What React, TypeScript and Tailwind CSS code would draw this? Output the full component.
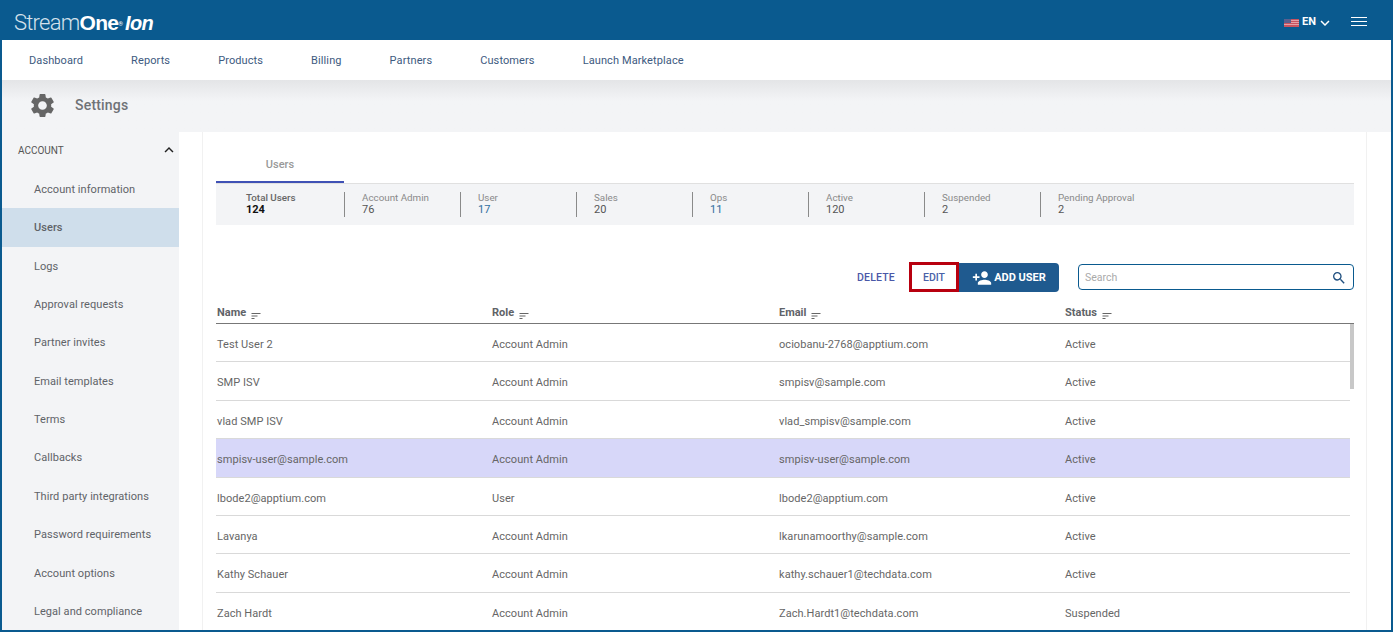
import React from 'react';
import { MdSettings, MdPersonAdd, MdSort, MdSearch, MdExpandLess, MdExpandMore } from 'react-icons/md';

const navLinks = ['Dashboard', 'Reports', 'Products', 'Billing', 'Partners', 'Customers', 'Launch Marketplace'];

const sideItems = [
  'Account information',
  'Users',
  'Logs',
  'Approval requests',
  'Partner invites',
  'Email templates',
  'Terms',
  'Callbacks',
  'Third party integrations',
  'Password requirements',
  'Account options',
  'Legal and compliance',
];

const stats = [
  { label: 'Total Users', value: '124', strong: true },
  { label: 'Account Admin', value: '76' },
  { label: 'User', value: '17', link: true },
  { label: 'Sales', value: '20' },
  { label: 'Ops', value: '11', link: true },
  { label: 'Active', value: '120' },
  { label: 'Suspended', value: '2' },
  { label: 'Pending Approval', value: '2' },
];

const users = [
  ['Test User 2', 'Account Admin', 'ociobanu-2768@apptium.com', 'Active'],
  ['SMP ISV', 'Account Admin', 'smpisv@sample.com', 'Active'],
  ['vlad SMP ISV', 'Account Admin', 'vlad_smpisv@sample.com', 'Active'],
  ['smpisv-user@sample.com', 'Account Admin', 'smpisv-user@sample.com', 'Active'],
  ['lbode2@apptium.com', 'User', 'lbode2@apptium.com', 'Active'],
  ['Lavanya', 'Account Admin', 'lkarunamoorthy@sample.com', 'Active'],
  ['Kathy Schauer', 'Account Admin', 'kathy.schauer1@techdata.com', 'Active'],
  ['Zach Hardt', 'Account Admin', 'Zach.Hardt1@techdata.com', 'Suspended'],
];

const Flag = () => (
  <svg width="15" height="8" viewBox="0 0 15 8" className="block">
    <rect width="15" height="8" fill="#e3a0a8" />
    <rect y="0" width="15" height="1" fill="#c8535f" />
    <rect y="2" width="15" height="1" fill="#c8535f" />
    <rect y="4" width="15" height="1" fill="#c8535f" />
    <rect y="6" width="15" height="2" fill="#c8535f" />
    <rect width="7" height="4" fill="#5a5f8e" />
  </svg>
);

const HeaderCell = ({ label, className }: { label: string; className: string }) => (
  <div className={`flex items-center text-[11px] font-bold text-[#5f6368] ${className}`}>
    <span className="mt-[2px]">{label}</span>
    <MdSort size={12} className="ml-[4px] mt-[7px] text-[#666]" />
  </div>
);

export default function App() {
  return (
    <div className="h-[632px] w-[1393px] overflow-hidden bg-[#0a5a8f] px-[2px] pb-[2px] font-['Roboto',sans-serif]">
      <div className="-mx-[2px] flex h-[40px] items-center justify-between bg-[#0a5a8f] pl-[14px] pr-[26px] pt-[5px]">
        <div className="flex items-baseline text-[22px] leading-[26px] text-white">
          <span className="font-light tracking-[-0.75px] text-[#d5e2ec]">Stream</span>
          <span className="font-['Liberation_Sans',sans-serif] text-[21px] font-bold tracking-[-0.7px]">One</span>
          <span className="mb-[9px] self-end text-[6px] leading-[6px]">®</span>
          <span className="ml-[2px] font-['Liberation_Sans',sans-serif] text-[20px] font-bold italic tracking-[-0.6px]">Ion</span>
        </div>
        <div className="flex items-center">
          <Flag />
          <span className="ml-[3px] text-[11px] font-bold text-white">EN</span>
          <MdExpandMore size={18} className="text-white" />
          <div className="mb-[3px] ml-[17px] flex w-[16px] flex-col gap-[3px]">
            <div className="h-[1px] bg-white" />
            <div className="h-[1px] bg-white" />
            <div className="h-[1px] bg-white" />
          </div>
        </div>
      </div>

      <div className="flex h-[40px] items-center bg-white pl-[27px] pt-[2px] text-[11px] tracking-[0.1px] text-[#3d5a80]">
        {navLinks.map((link) => (
          <span key={link} className="mr-[48px]">{link}</span>
        ))}
      </div>

      <div className="flex h-[52px] items-center bg-gradient-to-b from-[#e4e5e7] to-[#f3f4f6] to-40% pb-[1px] pl-[26px]">
        <MdSettings size={29} className="text-[#666]" />
        <span className="ml-[18px] text-[14px] font-medium tracking-[0.2px] text-[#6f7276]">Settings</span>
      </div>

      <div className="flex h-[498px] overflow-hidden">
        <aside className="w-[177px] shrink-0 bg-[#f3f4f6]">
          <div className="flex h-[38px] items-center justify-between pb-[2px] pl-[16px] pr-[1px] text-[10px] text-[#555]">
            <span>ACCOUNT</span>
            <MdExpandLess size={18} className="text-[#222]" />
          </div>
          {sideItems.map((item) => (
            <div
              key={item}
              className={`flex h-[38.36px] items-center pl-[32px] pt-[2px] text-[11px] tracking-[0.05px] text-[#5f6368] ${item === 'Users' ? 'bg-[#cfdeeb] font-medium' : ''}`}
            >
              {item}
            </div>
          ))}
        </aside>

        <main className="flex-1 bg-white pl-[23px] pr-[24px]">
          <div className="h-full border-x border-[#f1f1f1] pl-[13px] pr-[12px]">
            <div className="flex h-[52px] border-b border-[#e0e0e0]">
              <div className="flex h-[51px] w-[128px] items-center justify-center border-b-2 border-[#3f51b5] pt-[17px] text-[11px] font-medium text-[#999]">
                Users
              </div>
            </div>

            <div className="flex h-[41px] items-center bg-[#f3f4f6] pl-[13px]">
              {stats.map((s, i) => (
                <div
                  key={s.label}
                  className={`flex h-[25px] w-[116px] flex-col justify-center pb-[1px] pl-[17px] ${i < 7 ? 'border-r border-[#8a8a8a]' : ''}`}
                >
                  <span className={`text-[9.8px] leading-[12px] ${s.strong ? 'font-medium text-[#666]' : 'text-[#8a8a8a]'}`}>{s.label}</span>
                  <span className={`text-[11px] leading-[12px] ${s.strong ? 'font-bold text-[#111]' : s.link ? 'text-[#2f6f9f]' : 'text-[#555]'}`}>{s.value}</span>
                </div>
              ))}
            </div>

            <div className="flex h-[75px] items-end pb-[8px]">
              <div className="ml-auto flex items-center">
                <span className="mr-[14px] mt-[2px] text-[10.5px] font-medium tracking-[0.2px] text-[#4a58a8]">DELETE</span>
                <div className="flex h-[30px] w-[50px] items-center justify-center border-[3px] border-[#b8000f] pt-[2px] text-[10.5px] font-medium text-[#4a62a8]">
                  EDIT
                </div>
                <div className="flex h-[29px] w-[100px] items-center justify-center rounded-r-[4px] bg-[#1f5a8f] pt-[2px] text-[11px] font-bold text-white">
                  <MdPersonAdd size={20} className="mr-[2px]" />
                  ADD USER
                </div>
                <div className="ml-[19px] flex h-[26px] w-[276px] items-center justify-between rounded-[4px] border border-[#0a5a8f] pl-[6px] pr-[6px] pt-[2px] text-[10.5px] text-[#aaa]">
                  <span>Search</span>
                  <MdSearch size={16} className="text-[#1f4f7f]" />
                </div>
              </div>
            </div>

            <div className="relative">
              <div className="flex h-[24px] items-center border-b border-[#777] pl-[1px] pt-[1px]">
                <HeaderCell label="Name" className="w-[275px]" />
                <HeaderCell label="Role" className="w-[287px]" />
                <HeaderCell label="Email" className="w-[286px]" />
                <HeaderCell label="Status" className="flex-1" />
              </div>
              {users.map((u) => (
                <div
                  key={u[2]}
                  className={`mr-[4px] flex h-[38.4px] items-center border-b border-[#d9d9d9] pl-[1px] pt-[5px] text-[11px] tracking-[0.05px] text-[#666] ${u[2] === 'smpisv-user@sample.com' ? 'bg-[#d7d7f9]' : ''}`}
                >
                  <span className="w-[275px]">{u[0]}</span>
                  <span className="w-[287px]">{u[1]}</span>
                  <span className="w-[286px]">{u[2]}</span>
                  <span className="flex-1">{u[3]}</span>
                </div>
              ))}
              <div className="absolute right-0 top-[24px] h-[65px] w-[4px] bg-[#c8c8c8]" />
            </div>
          </div>
        </main>
      </div>
    </div>
  );
}
